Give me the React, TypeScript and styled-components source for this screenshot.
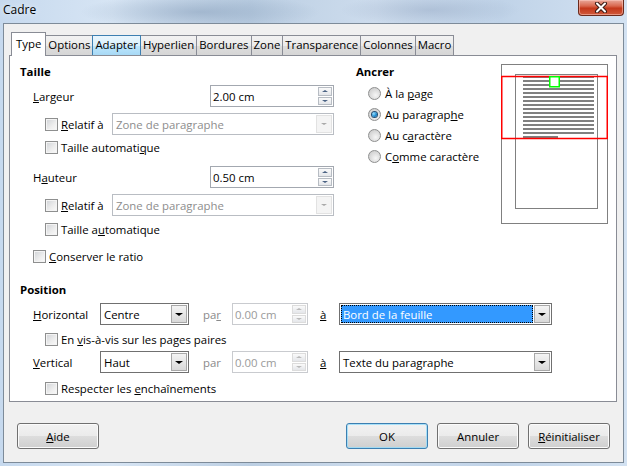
import React from 'react';
import styled, { createGlobalStyle, css } from 'styled-components';

const GlobalStyle = createGlobalStyle`
  html, body {
    margin: 0;
    padding: 0;
  }
  body {
    width: 627px;
    height: 466px;
    overflow: hidden;
    font-family: "Open Sans", "Noto Sans", sans-serif;
    font-size: 11.4px;
    color: #000;
  }
  button {
    font-family: inherit;
    font-size: inherit;
  }
`;

// fenêtre + barre de titre façon Aero
const Window = styled.div`
  width: 627px;
  height: 466px;
  box-sizing: border-box;
  padding: 0 3px 3px 3px;
  display: flex;
  flex-direction: column;
  background:
    radial-gradient(ellipse 120px 18px at 200px 12px, rgba(120, 145, 175, 0.45), transparent),
    radial-gradient(ellipse 90px 16px at 430px 10px, rgba(130, 150, 180, 0.35), transparent),
    linear-gradient(90deg, #c6d9ee 0%, #d7e5f4 18%, #bccfe3 40%, #cddced 60%, #c0d3e8 80%, #d3e2f2 100%);
`;

const TitleBar = styled.div`
  height: 23px;
  display: flex;
  justify-content: space-between;
  align-items: flex-start;
`;

const Title = styled.div`
  line-height: 20px;
  font-size: 12px;
  text-shadow: 0 0 6px rgba(255, 255, 255, 0.9);
`;

const CloseButton = styled.div`
  width: 46px;
  height: 16px;
  box-sizing: border-box;
  border: 1px solid #6b2a1c;
  border-top: none;
  border-radius: 0 0 4px 4px;
  background: linear-gradient(#e9a89a 0%, #d9684f 40%, #c4381b 55%, #cf5a3c 100%);
  box-shadow: inset 0 0 0 1px rgba(255, 210, 200, 0.5);
  display: flex;
  align-items: center;
  justify-content: center;
`;

const Client = styled.div`
  flex: 1;
  background: #f0f0f0;
  border: 1px solid #7d8b99;
  display: flex;
  flex-direction: column;
`;

// onglets
const TabStrip = styled.div`
  display: flex;
  align-items: flex-end;
  height: 23px;
  margin: 8px 0 0 7px;
  position: relative;
  z-index: 1;
`;

const Tab = styled.div<{ $active?: boolean; $hover?: boolean }>`
  box-sizing: border-box;
  height: 20px;
  padding: 0 2px;
  line-height: 18px;
  border: 1px solid #898c95;
  border-bottom: none;
  margin-left: -1px;
  background: linear-gradient(#f2f2f2 0%, #ebebeb 50%, #dddddd 51%, #d6d6d6 100%);
  white-space: nowrap;
  ${p => p.$hover && css`
    border-color: #3c7fb1;
    position: relative;
    z-index: 1;
    background: linear-gradient(#eaf6fd 0%, #d9f0fc 50%, #bee6fd 51%, #a7d9f5 100%);
  `}
  ${p => p.$active && css`
    height: 24px;
    margin-left: 0;
    margin-bottom: -1px;
    line-height: 22px;
    padding: 0 4px;
    background: #fff;
  `}
`;

const Page = styled.div`
  height: 347px;
  box-sizing: border-box;
  margin: 0 6px 0 5px;
  border: 1px solid #898c95;
  background: #fff;
  padding: 8px 8px 0 10px;
`;

const TopSection = styled.div`
  display: flex;
  align-items: flex-start;
`;

const SizeColumn = styled.div`
  width: 314px;
`;

const AnchorColumn = styled.div`
  margin-left: 22px;
`;

const Heading = styled.div<{ $mt?: number }>`
  font-weight: bold;
  height: 16px;
  line-height: 16px;
  margin-top: ${p => p.$mt ?? 0}px;
`;

const Row = styled.div<{ $mt: number; $indent: number }>`
  display: flex;
  align-items: center;
  height: 22px;
  margin-top: ${p => p.$mt}px;
  padding-left: ${p => p.$indent}px;
  white-space: nowrap;
`;

const CheckRow = styled(Row)`
  height: 20px;
`;

const RadioRow = styled(Row)`
  height: 21px;
`;

const FieldLabel = styled.span<{ $w?: number; $muted?: boolean; $ml?: number }>`
  ${p => p.$w && `width: ${p.$w}px;`}
  flex: ${p => (p.$w ? 'none' : '1')};
  margin-left: ${p => p.$ml ?? 0}px;
  color: ${p => (p.$muted ? '#8a8a8a' : '#000')};
`;

const Box = styled.span`
  width: 13px;
  height: 13px;
  box-sizing: border-box;
  flex: none;
  border: 1px solid #8e8f8f;
  background: linear-gradient(135deg, #cfd2d6 0%, #eeeeee 60%, #fafafa 100%);
  box-shadow: inset 0 0 0 1px #f4f4f4;
  margin-right: 3px;
`;

const Radio = styled.span<{ $on?: boolean }>`
  width: 13px;
  height: 13px;
  box-sizing: border-box;
  flex: none;
  border-radius: 50%;
  border: 1px solid #8e8f8f;
  background: radial-gradient(circle at 60% 65%, #f6f6f6 0%, #d3d3d3 70%, #c4c4c4 100%);
  margin-right: 4px;
  display: flex;
  align-items: center;
  justify-content: center;
  &::after {
    content: '';
    display: ${p => (p.$on ? 'block' : 'none')};
    width: 5px;
    height: 5px;
    border-radius: 50%;
    background: radial-gradient(circle at 35% 35%, #9be0ff 0%, #1a8ad0 55%, #0b4e88 100%);
    box-shadow: 0 0 0 1px #254f73;
  }
`;

// champs
const Spin = styled.div<{ $w: number; $disabled?: boolean }>`
  width: ${p => p.$w}px;
  height: 22px;
  box-sizing: border-box;
  flex: none;
  border: 1px solid ${p => (p.$disabled ? '#c9cbcf' : '#a3a8b0')};
  background: #fff;
  display: flex;
  align-items: center;
  padding: 1px;
  color: ${p => (p.$disabled ? '#9a9a9a' : '#000')};
`;

const SpinText = styled.span`
  flex: 1;
  padding-left: 1px;
`;

const SpinButtons = styled.div`
  width: 14px;
  height: 100%;
  display: flex;
  flex-direction: column;
  gap: 1px;
`;

const SpinButton = styled.div<{ $disabled?: boolean }>`
  flex: 1;
  border: 1px solid ${p => (p.$disabled ? '#dcdcdc' : '#b7bcc3')};
  background: linear-gradient(#fafafa, #e4e6ea);
  display: flex;
  align-items: center;
  justify-content: center;
`;

const Arrow = styled.span<{ $dir: 'up' | 'down'; $color: string; $size?: number }>`
  width: 0;
  height: 0;
  border-left: ${p => p.$size ?? 3}px solid transparent;
  border-right: ${p => p.$size ?? 3}px solid transparent;
  ${p => (p.$dir === 'up'
    ? `border-bottom: ${(p.$size ?? 3) - 1}px solid ${p.$color};`
    : `border-top: ${(p.$size ?? 3) - 1}px solid ${p.$color};`)}
`;

const Combo = styled.div<{ $w: number; $disabled?: boolean; $push?: boolean }>`
  width: ${p => p.$w}px;
  height: 22px;
  box-sizing: border-box;
  flex: none;
  margin-left: ${p => (p.$push ? 'auto' : '0')};
  border: 1px solid ${p => (p.$disabled ? '#b9bdc3' : '#707070')};
  background: #fff;
  display: flex;
  align-items: stretch;
  padding: 1px;
  color: ${p => (p.$disabled ? '#8d8d8d' : '#000')};
`;

const ComboText = styled.span<{ $selected?: boolean }>`
  flex: 1;
  display: flex;
  align-items: center;
  padding-left: 2px;
  ${p => p.$selected && css`
    background: #3399ff;
    color: #fff;
    outline: 1px dotted #000;
    outline-offset: -1px;
  `}
`;

const DropButton = styled.div<{ $disabled?: boolean }>`
  width: 16px;
  box-sizing: border-box;
  margin-left: 1px;
  border: 1px solid ${p => (p.$disabled ? '#e2e2e2' : '#a8a8a8')};
  background: ${p => (p.$disabled ? '#f4f4f4' : 'linear-gradient(#f4f4f4, #d9d9d9)')};
  display: flex;
  align-items: center;
  justify-content: center;
`;

// aperçu
const Preview = styled.svg`
  margin-left: auto;
  flex: none;
`;

const PositionSection = styled.div``;

// boutons du bas
const ButtonBar = styled.div`
  display: flex;
  gap: 9px;
  margin-top: 21px;
  padding: 0 13px;
`;

const DialogButton = styled.button<{ $default?: boolean; $push?: boolean }>`
  width: 82px;
  height: 26px;
  padding: 0;
  color: #000;
  border: 1px solid ${p => (p.$default ? '#3c7fb1' : '#707070')};
  border-radius: 3px;
  background: linear-gradient(#f2f2f2 0%, #ebebeb 50%, #dddddd 51%, #cfcfcf 100%);
  box-shadow: inset 0 0 0 1px ${p => (p.$default ? 'rgba(150, 220, 250, 0.8)' : '#fbfbfb')};
  ${p => p.$push && 'margin-right: auto;'}
`;

const Checkbox: React.FC<{ children: React.ReactNode }> = ({ children }) => (
  <>
    <Box />
    <span>{children}</span>
  </>
);

const RadioOption: React.FC<{ on?: boolean; children: React.ReactNode }> = ({ on, children }) => (
  <>
    <Radio $on={on} />
    <span>{children}</span>
  </>
);

const SpinField: React.FC<{ value: string; w: number; disabled?: boolean }> = ({ value, w, disabled }) => {
  const c = disabled ? '#b9b9b9' : '#4a6283';
  return (
    <Spin $w={w} $disabled={disabled}>
      <SpinText>{value}</SpinText>
      <SpinButtons>
        <SpinButton $disabled={disabled}><Arrow $dir="up" $color={c} /></SpinButton>
        <SpinButton $disabled={disabled}><Arrow $dir="down" $color={c} /></SpinButton>
      </SpinButtons>
    </Spin>
  );
};

const ComboBox: React.FC<{ value: string; w: number; disabled?: boolean; selected?: boolean; push?: boolean }> = ({ value, w, disabled, selected, push }) => (
  <Combo $w={w} $disabled={disabled} $push={push}>
    <ComboText $selected={selected}>{value}</ComboText>
    <DropButton $disabled={disabled}>
      <Arrow $dir="down" $color={disabled ? '#a9a9a9' : '#000'} $size={disabled ? 3 : 4} />
    </DropButton>
  </Combo>
);

const tabs = ['Type', 'Options', 'Adapter', 'Hyperlien', 'Bordures', 'Zone', 'Transparence', 'Colonnes', 'Macro'];

const PreviewDrawing: React.FC = () => {
  const lines = Array.from({ length: 15 }, (_, i) => 12 + i * 4);
  return (
    <Preview width={107} height={160} viewBox="0 0 107 160">
      <rect x={0.5} y={0.5} width={106} height={159} fill="#fff" stroke="#808080" />
      <rect x={14.5} y={10.5} width={82} height={134} fill="none" stroke="#808080" />
      {lines.map(y => (
        <rect key={y} x={22} y={y} width={71} height={2} fill="#808080" />
      ))}
      <rect x={22} y={72} width={35} height={2} fill="#808080" />
      <rect x={0.75} y={12.5} width={105.5} height={62} fill="none" stroke="#ff0000" strokeWidth={1.5} />
      <rect x={48.75} y={12.75} width={9.5} height={10} fill="#fff" stroke="#00ff00" strokeWidth={1.5} />
    </Preview>
  );
};

const App: React.FC = () => {
  return (
    <>
      <GlobalStyle />
      <Window>
        <TitleBar>
          <Title>Cadre</Title>
          <CloseButton>
            <svg width="14" height="11" viewBox="0 0 14 11">
              <path d="M3 1.5 L11 9.5 M11 1.5 L3 9.5" stroke="#3b1a14" strokeWidth="4" strokeLinecap="round" />
              <path d="M3 1.5 L11 9.5 M11 1.5 L3 9.5" stroke="#fff" strokeWidth="2" strokeLinecap="round" />
            </svg>
          </CloseButton>
        </TitleBar>
        <Client>
          <TabStrip>
            {tabs.map((t, i) => (
              <Tab key={t} $active={i === 0} $hover={t === 'Adapter'}>{t}</Tab>
            ))}
          </TabStrip>
          <Page>
            <TopSection>
              <SizeColumn>
                <Heading>Taille</Heading>
                <Row $mt={5} $indent={13}>
                  <FieldLabel><u>L</u>argeur</FieldLabel>
                  <SpinField value="2.00 cm" w={124} />
                </Row>
                <Row $mt={6} $indent={25}>
                  <Checkbox><u>R</u>elatif à</Checkbox>
                  <ComboBox value="Zone de paragraphe" w={222} disabled push />
                </Row>
                <CheckRow $mt={2} $indent={25}>
                  <Checkbox>Taille automati<u>q</u>ue</Checkbox>
                </CheckRow>
                <Row $mt={9} $indent={13}>
                  <FieldLabel>H<u>a</u>uteur</FieldLabel>
                  <SpinField value="0.50 cm" w={124} />
                </Row>
                <Row $mt={6} $indent={25}>
                  <Checkbox><u>R</u>elatif à</Checkbox>
                  <ComboBox value="Zone de paragraphe" w={222} disabled push />
                </Row>
                <CheckRow $mt={3} $indent={25}>
                  <Checkbox>Taille a<u>u</u>tomatique</Checkbox>
                </CheckRow>
                <CheckRow $mt={7} $indent={13}>
                  <Checkbox><u>C</u>onserver le ratio</Checkbox>
                </CheckRow>
              </SizeColumn>
              <AnchorColumn>
                <Heading>Ancrer</Heading>
                <RadioRow $mt={3} $indent={12}>
                  <RadioOption>À la <u>p</u>age</RadioOption>
                </RadioRow>
                <RadioRow $mt={0} $indent={12}>
                  <RadioOption on>Au paragrap<u>h</u>e</RadioOption>
                </RadioRow>
                <RadioRow $mt={0} $indent={12}>
                  <RadioOption>Au c<u>a</u>ractère</RadioOption>
                </RadioRow>
                <RadioRow $mt={0} $indent={12}>
                  <RadioOption>C<u>o</u>mme caractère</RadioOption>
                </RadioRow>
              </AnchorColumn>
              <PreviewDrawing />
            </TopSection>
            <PositionSection>
              <Heading $mt={16}>Position</Heading>
              <Row $mt={5} $indent={13}>
                <FieldLabel $w={67}><u>H</u>orizontal</FieldLabel>
                <ComboBox value="Centre" w={89} />
                <FieldLabel $w={29} $ml={14} $muted>pa<u>r</u></FieldLabel>
                <SpinField value="0.00 cm" w={76} disabled />
                <FieldLabel $w={19} $ml={12}><u>à</u></FieldLabel>
                <ComboBox value="Bord de la feuille" w={213} selected />
              </Row>
              <CheckRow $mt={4} $indent={25}>
                <Checkbox>En <u>v</u>is-à-vis sur les pages paires</Checkbox>
              </CheckRow>
              <Row $mt={2} $indent={13}>
                <FieldLabel $w={67}><u>V</u>ertical</FieldLabel>
                <ComboBox value="Haut" w={89} />
                <FieldLabel $w={29} $ml={14} $muted>par</FieldLabel>
                <SpinField value="0.00 cm" w={76} disabled />
                <FieldLabel $w={19} $ml={12}><u>à</u></FieldLabel>
                <ComboBox value="Texte du paragraphe" w={213} />
              </Row>
              <CheckRow $mt={5} $indent={25}>
                <Checkbox>Respecter les <u>e</u>nchaînements</Checkbox>
              </CheckRow>
            </PositionSection>
          </Page>
          <ButtonBar>
            <DialogButton $push><u>A</u>ide</DialogButton>
            <DialogButton $default>OK</DialogButton>
            <DialogButton>Annuler</DialogButton>
            <DialogButton><u>R</u>éinitialiser</DialogButton>
          </ButtonBar>
        </Client>
      </Window>
    </>
  );
};

export default App;
